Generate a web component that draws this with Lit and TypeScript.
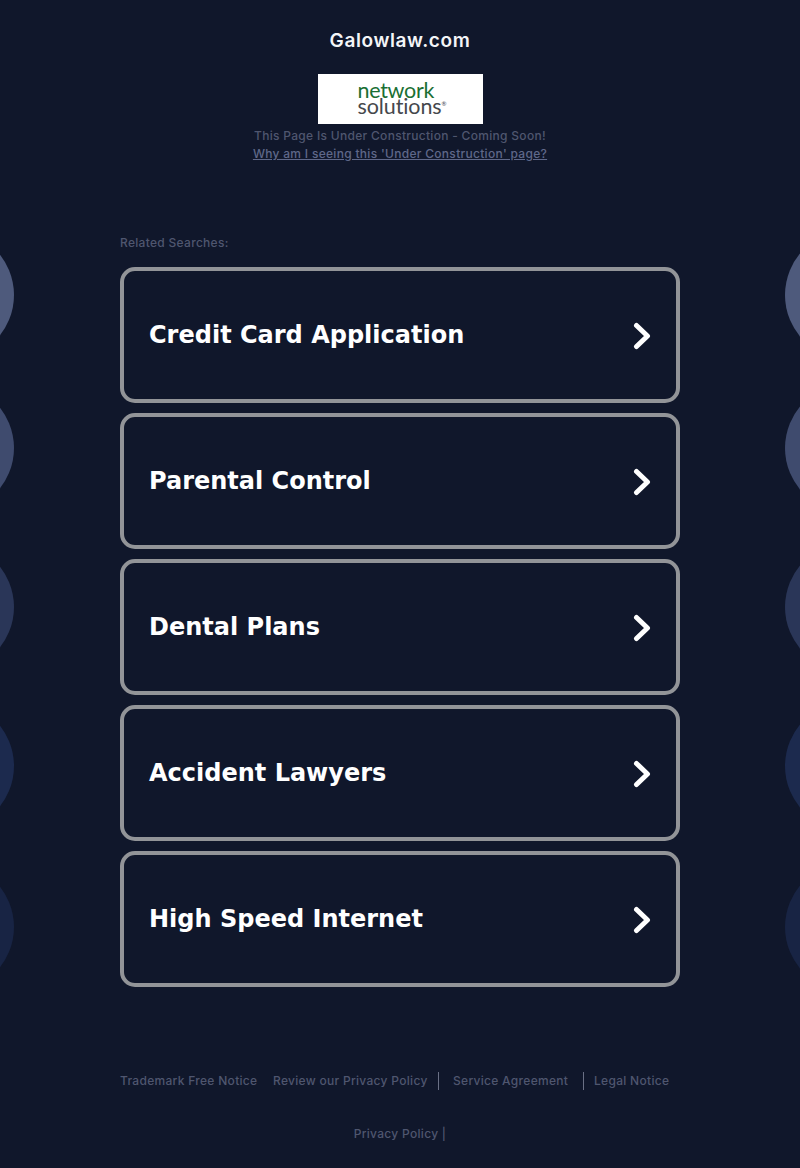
import { LitElement, html, css, svg } from "lit";
import { customElement } from "lit/decorators.js";

const ITEMS = ["Credit Card Application", "Parental Control", "Dental Plans", "Accident Lawyers", "High Speed Internet"];
const BLOBS = [
  { y: 295, c: "#4e5a7c" },
  { y: 448, c: "#3f4b6e" },
  { y: 607, c: "#2a3658" },
  { y: 766, c: "#1c2a4e" },
  { y: 927, c: "#182444" },
];

@customElement("app-root")
export class AppRoot extends LitElement {
  static styles = css`
    :host { display: block; position: relative; width: 800px; height: 1168px; overflow: hidden; background: #10172b; font-family: "Inter", "DejaVu Sans", sans-serif; font-weight: 500; letter-spacing: .3px; }
    .blob { position: absolute; width: 130px; height: 130px; border-radius: 50%; }
    .wrap { position: relative; width: 560px; margin: 0 auto; display: flex; flex-direction: column; }
    .title { margin: 30px 0 0; text-align: center; font: 600 19px/22px "Inter", sans-serif; color: #f4f5f8; letter-spacing: .6px; }
    .logo { align-self: center; box-sizing: border-box; margin-top: 22px; width: 165px; height: 50px; background: #fff; padding: 8px 0 0 40px; display: flex; flex-direction: column; font: 400 21.5px/16px "Lato", sans-serif; letter-spacing: -.3px; }
    .net { color: #1a6f33; }
    .sol { color: #45484c; letter-spacing: -.1px; }
    .sol sup { font-size: 6px; line-height: 0; }
    .sub { text-align: center; font-size: 12px; line-height: 18px; color: #4f566f; margin-top: 3px; }
    .why { text-align: center; font-size: 12px; line-height: 18px; color: #5f6889; text-decoration: underline; }
    .rel { margin-top: 71px; font-size: 12px; line-height: 18px; color: #4f566f; }
    .list { display: flex; flex-direction: column; gap: 10px; margin-top: 15px; }
    .item { box-sizing: border-box; height: 136px; border: 4px solid #929498; border-radius: 15px; display: flex; align-items: center; justify-content: space-between; padding: 0 25px; color: #fff; font: 700 24px/30px "DejaVu Sans", sans-serif; letter-spacing: 0; }
    .item svg { width: 18px; height: 28px; margin-top: 2px; }
    .foot { display: flex; margin-top: 85px; font-size: 12px; line-height: 18px; color: #4f566f; align-items: center; }
    .foot span { white-space: nowrap; }
    .t1 { width: 139px; margin-right: 14px; }
    .t2 { width: 155px; padding-right: 10px; border-right: 1px solid #6a7085; margin-right: 14px; }
    .t3 { width: 116px; padding-right: 14px; border-right: 1px solid #6a7085; margin-right: 10px; }
    .pp { text-align: center; font-size: 12px; line-height: 18px; color: #4f566f; margin-top: 35px; }
  `;
  render() {
    return html`
      ${BLOBS.map(b => html`
        <div class="blob" style="left:-116px;top:${b.y - 65}px;background:${b.c}"></div>
        <div class="blob" style="left:785px;top:${b.y - 65}px;background:${b.c}"></div>`)}
      <div class="wrap">
        <h1 class="title">Galowlaw.com</h1>
        <div class="logo"><span class="net">network</span><span class="sol">solutions<sup>®</sup></span></div>
        <div class="sub">This Page Is Under Construction - Coming Soon!</div>
        <div class="why">Why am I seeing this 'Under Construction' page?</div>
        <div class="rel">Related Searches:</div>
        <div class="list">
          ${ITEMS.map(t => html`<div class="item"><span>${t}</span>
            <svg viewBox="0 0 18 28">${svg`<path d="M3.5 3.5 L14.5 14 L3.5 24.5" fill="none" stroke="#fff" stroke-width="5" stroke-linecap="round" stroke-linejoin="round"/>`}</svg></div>`)}
        </div>
        <div class="foot">
          <span class="t1">Trademark Free Notice</span>
          <span class="t2">Review our Privacy Policy</span>
          <span class="t3">Service Agreement</span>
          <span>Legal Notice</span>
        </div>
        <div class="pp">Privacy Policy |</div>
      </div>`;
  }
}
